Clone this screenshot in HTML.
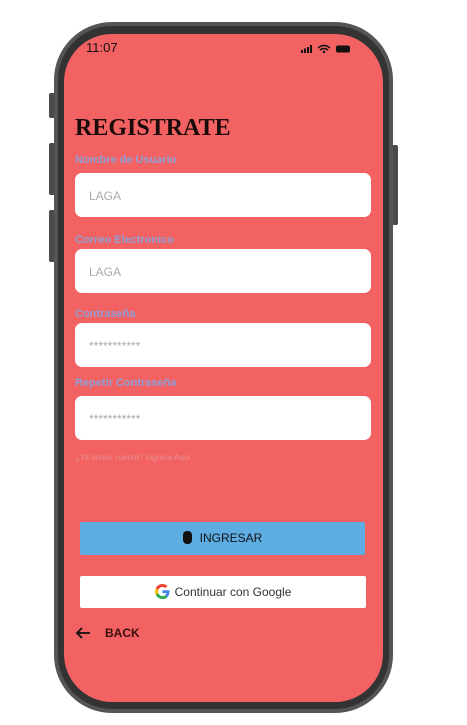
<!DOCTYPE html>
<html><head><meta charset="utf-8"><style>
*{margin:0;padding:0;box-sizing:border-box}
body{width:467px;height:725px;background:#fff;position:relative;overflow:hidden;font-family:"Liberation Sans",sans-serif}
.btn{position:absolute;background:#4a4a4a;border-radius:2px}
.phone{position:absolute;left:54px;top:22px;width:339px;height:691px;border-radius:58px;background:#555;}
.inner{position:absolute;left:4px;top:4px;right:4px;bottom:4px;border-radius:54px;background:#333}
.screen{position:absolute;left:10px;top:12px;width:319px;height:668px;border-radius:48px;background:#f26262;overflow:hidden}
.abs{position:absolute}
.lbl{position:absolute;left:11px;font-size:11px;color:#8f9fd6;font-weight:bold}
.inp{position:absolute;left:11px;width:296px;height:44px;background:#fff;border-radius:7px;font-size:12px;color:#aaa;padding:0 0 0 14px;line-height:46px}
</style></head><body>
<div class="btn" style="left:49px;top:93px;width:6px;height:25px"></div>
<div class="btn" style="left:49px;top:143px;width:6px;height:52px"></div>
<div class="btn" style="left:49px;top:210px;width:6px;height:52px"></div>
<div class="btn" style="left:392px;top:145px;width:6px;height:80px"></div>
<div class="phone"><div class="inner"></div>
<div class="screen">
<div class="abs" style="left:22px;top:6px;font-size:13px;color:#111">11:07</div>
<div class="abs" style="left:237px;top:7px;width:60px;height:10px">
<svg width="60" height="10"><rect x="0" y="6" width="2" height="3" fill="#111"/><rect x="3" y="4.5" width="2" height="4.5" fill="#111"/><rect x="6" y="3" width="2" height="6" fill="#111"/><rect x="9" y="1" width="2" height="8" fill="#111"/>
<path d="M17 4 Q23 -1 29 4 M19 6 Q23 3 27 6" stroke="#111" stroke-width="1.5" fill="none"/><circle cx="23" cy="8" r="1.2" fill="#111"/>
<rect x="35" y="1.5" width="14" height="7" rx="2" fill="#111"/></svg></div>
<div class="abs" style="left:11px;top:81px;font-family:'Liberation Serif',serif;font-size:24px;font-weight:bold;color:#1a0a0a">REGISTRATE</div>
<div class="lbl" style="top:120px">Nombre de Usuario</div>
<div class="inp" style="top:139px">LAGA</div>
<div class="lbl" style="top:200px">Correo Electronico</div>
<div class="inp" style="top:215px">LAGA</div>
<div class="lbl" style="top:274px">Contraseña</div>
<div class="inp" style="top:289px">***********</div>
<div class="lbl" style="top:343px">Repetir Contraseña</div>
<div class="inp" style="top:362px">***********</div>
<div class="abs" style="left:11px;top:419px;font-size:8px;color:#e89090">¿Ya tienes cuenta? Ingresa Aqui</div>
<div class="abs" style="left:16px;top:488px;width:285px;height:33px;background:#5dade2;border-radius:2px;text-align:center;line-height:33px;font-size:12px;color:#111">
<span style="display:inline-block;width:9px;height:13px;background:#111;border-radius:4px;vertical-align:-2px;margin-right:8px"></span>INGRESAR</div>
<div class="abs" style="left:16px;top:542px;width:286px;height:32px;background:#fff;border-radius:2px;text-align:center;line-height:32px;font-size:12px;color:#333">
<svg width="15" height="15" viewBox="0 0 48 48" style="vertical-align:-3px;margin-right:5px"><path fill="#EA4335" d="M24 9.5c3.5 0 6.6 1.2 9 3.5l6.7-6.7C35.6 2.4 30.2 0 24 0 14.6 0 6.6 5.4 2.7 13.3l7.8 6C12.4 13.7 17.7 9.5 24 9.5z"/><path fill="#4285F4" d="M46.5 24.5c0-1.6-.1-3.1-.4-4.5H24v9h12.7c-.6 3-2.300 5.5-4.8 7.2l7.6 5.9c4.4-4.1 7-10.1 7-17.6z"/><path fill="#FBBC05" d="M10.5 28.7c-.5-1.4-.8-3-.8-4.700s.3-3.2.8-4.7l-7.8-6C1 16.6 0 20.2 0 24s1 7.4 2.7 10.7l7.8-6z"/><path fill="#34A853" d="M24 48c6.5 0 11.9-2.1 15.9-5.8l-7.6-5.9c-2.1 1.4-4.8 2.3-8.3 2.3-6.3 0-11.6-4.2-13.5-9.9l-7.8 6C6.6 42.6 14.6 48 24 48z"/></svg>Continuar con Google</div>
<svg class="abs" style="left:11px;top:593px" width="16" height="12"><path d="M15 6H2M7 1L2 6l5 5" stroke="#111" stroke-width="1.8" fill="none"/></svg>
<div class="abs" style="left:41px;top:592px;font-size:12px;font-weight:bold;color:#3a1010">BACK</div>
</div></div>
</body></html>
